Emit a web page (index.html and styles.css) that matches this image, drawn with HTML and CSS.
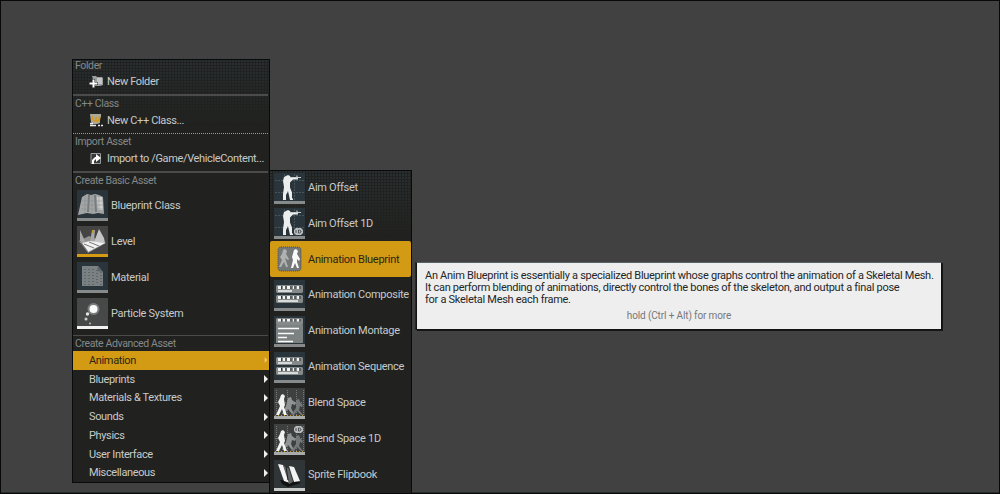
FILE: index.html
```html
<!DOCTYPE html>
<html lang="en">
<head>
<meta charset="utf-8">
<title>Content Browser</title>
<link rel="stylesheet" href="styles.css">
</head>
<body>
<svg class="defs" width="0" height="0" aria-hidden="true">
  <defs>
    <symbol id="aim" viewBox="0 0 31 28">
      <path d="M1 7.500H30M1 19.500H30M10.500 1V28M20.500 1V28" stroke="#46545b" stroke-dasharray="2 1" fill="none"/>
      <path d="M12 3l2-1 2 1 1 2h7v1.500h-5l-3 3v5l2 5v6h1v1.500h-3l-2-9-2 4v5h-3v-6l1-7-1-6 1-4z" fill="#eceeee"/>
      <path d="M16 4.500h11M23 2.500v3" stroke="#c9cdce" stroke-width="1.200"/>
    </symbol>
    <symbol id="strip" viewBox="0 0 27 8" preserveAspectRatio="none">
      <path d="M1 0H26L27 1V7L26 8H1L0 7V1Z" fill="#858989"/>
      <path d="M2 1h3v3H2zM7 1h2v3H7zM11 1h3v3h-3zM17 1h1v3h-1zM21 1h2v3h-2z" fill="#f2f3f3"/>
      <path d="M5.500 1v3M10 1v3M15 1v3M19 1v3M24 1v3" stroke="#363a3b"/>
    </symbol>
    <symbol id="strips" viewBox="0 0 31 28">
      <use href="#strip" x="2" y="5" width="27" height="8"/>
      <use href="#strip" x="2" y="15" width="27" height="8"/>
      <path d="M4 11H18M4 21H24" stroke="#f5f5f5" stroke-width="1.300"/>
    </symbol>
    <symbol id="blend" viewBox="0 0 31 28">
      <path d="M2.500 2V27M13.500 2V27M22.500 2V27M29.500 2V27M1 14.500H30" stroke="#74797b" stroke-dasharray="1 1"/>
      <path d="M14 10l3-1 1 3 4 3-1 2-3-1-1 4 3 6h-2l-4-5-4 5h-2l4-8z" fill="#909495"/>
      <path d="M22 12l3-1 1 3 3 3-1 2-2-1-1 4 4 5h-2l-4-4-3 4h-3l5-7z" fill="#747879"/>
      <path d="M7 7l2-1 2 2-1 3 1 6-1 2 3 8h-3l-2-6-3 6H2l4-9-2-4 2-4z" fill="#f1f2f2"/>
      <path d="M1 27.500H30" stroke="#c79a27" stroke-dasharray="1 2"/>
    </symbol>
    <symbol id="oned" viewBox="0 0 9 7">
      <path d="M2 0h5l2 2v3L7 7H2L0 5V2z" fill="#b9bdbe"/>
      <path d="M2 2v3M4.500 2v3h1l1.500-1V3L5.500 2z" fill="none" stroke="#33393b" stroke-width=".8"/>
    </symbol>
  </defs>
</svg>
<main class="viewport">
  <nav class="menu">
    <section class="group small first">
      <h2>Folder</h2>
      <div class="command"><svg width="14" height="13" viewBox="0 0 14 13"><path d="M3 1h4l1 1h5l1 1v7l-3 1H6z" fill="#9b9d9d"/><path d="M8 3h5v6H8z" fill="#c5c7c7"/><path d="M4.500 4v9M0 8.500h9" stroke="#222" stroke-width="3"/><path d="M4.500 4.500v8M.5 8.500h8" stroke="#fff" stroke-width="2"/></svg><span>New Folder</span></div>
    </section>
    <section class="group small dotted">
      <h2>C++ Class</h2>
      <div class="command"><svg width="14" height="13" viewBox="0 0 14 13"><path d="M1 0h11v3l-1 1v5l-3 1H4L2 8z" fill="#aaa99c"/><path d="M3.500 2v3l2 2h4l1-2V2M7 3v4" fill="none" stroke="#d59a19" stroke-width="1.700"/><path d="M1 11.500h6M9 11.500h2M12 11.500h2M1 9.500h3" stroke="#eee" stroke-width="1.300"/></svg><span>New C++ Class...</span></div>
    </section>
    <section class="group small import">
      <h2>Import Asset</h2>
      <div class="command"><svg width="14" height="13" viewBox="0 0 14 13"><path d="M2 1.500h9.500v10H2z" fill="#363939" stroke="#979a9a"/><path d="M3 12V8l3-3h1V2l5 4-5 4V7L5 9v3z" fill="#fff"/></svg><span>Import to /Game/VehicleContent...</span></div>
    </section>
    <section class="group basic">
      <h2>Create Basic Asset</h2>
      <div class="asset"><svg class="thumb" viewBox="0 0 31 28"><path d="M5 7l5-3 4 1 4-1 4 1 4 2 1 17-6-1-5 1-6-1-9 2z" fill="#a4a6a6"/><path d="M12 5l-1 17M18 5l1 17" stroke="#777b7b" stroke-width="2"/><path d="M20 7h5l1 13h-5z" fill="#d0d0d0"/><path d="M5 11h20M5 15h21M4 19h22M8 5v18M15 5v18M22 5v17" stroke="#858989" stroke-width=".5"/></svg><span>Blueprint Class</span></div>
      <div class="asset level"><svg class="thumb" viewBox="0 0 31 28"><path d="M2 15l10-5 17 7-18 10z" fill="#929292"/><path d="M3 4l4 9 1 3-5 1zM15 4h3l-1 12h-4z" fill="#a7a7a7"/><path d="M22 3l5 9 1 5-11-1z" fill="#c5c5c5"/><path d="M5 17l8-2 15 2-17 9z" fill="#f1f1f1"/><path d="M7 18l10 4M12 16l10 4M3 15l8 11" stroke="#777"/><path d="M15 4h2v3h-2z" fill="#c99a23"/></svg><span>Level</span></div>
      <div class="asset"><svg class="thumb" viewBox="0 0 31 28"><path d="M5 4h16l5 6v14H5z" fill="#7b8082"/><path d="M8 7v16M12 7v16M16 7v16M20 8v15M24 10v13" stroke="#464e52" stroke-dasharray="1 2"/><path d="M21 4l-1 5 6 1" fill="#5c6569"/></svg><span>Material</span></div>
      <div class="asset particle"><svg class="thumb" viewBox="0 0 31 28"><circle cx="16.500" cy="11" r="6" fill="#7b7d7d"/><circle cx="16.500" cy="11" r="4" fill="#fafafa"/><circle cx="10.500" cy="16" r="1.700" fill="#e4e4e4"/><circle cx="9" cy="21" r="1.500" fill="#ccc"/><circle cx="13" cy="25.500" r="1" fill="#bbb"/></svg><span>Particle System</span></div>
    </section>
    <section class="group advanced">
      <h2>Create Advanced Asset</h2>
      <div class="category active"><span>Animation</span><i></i></div>
      <div class="category"><span>Blueprints</span><i></i></div>
      <div class="category"><span>Materials &amp; Textures</span><i></i></div>
      <div class="category"><span>Sounds</span><i></i></div>
      <div class="category"><span>Physics</span><i></i></div>
      <div class="category"><span>User Interface</span><i></i></div>
      <div class="category"><span>Miscellaneous</span><i></i></div>
    </section>
  </nav>
  <nav class="submenu">
    <div class="entry"><svg class="thumb" viewBox="0 0 31 28"><use href="#aim" width="31" height="28"/></svg><span>Aim Offset</span></div>
    <div class="entry"><svg class="thumb" viewBox="0 0 31 28"><use href="#aim" width="31" height="28"/><use href="#oned" x="20" y="20" width="9" height="7"/></svg><span>Aim Offset 1D</span></div>
    <div class="entry active"><svg class="thumb" viewBox="0 0 31 28"><rect x="4" y="3" width="23" height="24" rx="3" fill="#757879" stroke="#514b36" stroke-dasharray="1 1"/><path d="M9 6l2-1 2 2-1 3 3 5-1 1-3-2 1 3 2 6h-2l-2-5-3 5H5l3-7-2-3 2-3z" fill="#b0b1b1"/><path d="M20 6l2-1 2 2-1 3 3 5-1 2-2-2v3l2 6h-2l-2-5-2 5h-2l2-8-1-3z" fill="#fafafa"/></svg><span>Animation Blueprint</span></div>
    <div class="entry"><svg class="thumb" viewBox="0 0 31 28"><use href="#strips" width="31" height="28"/></svg><span>Animation Composite</span></div>
    <div class="entry"><svg class="thumb" viewBox="0 0 31 28"><use href="#strip" x="2" y="2" width="27" height="7"/><path d="M2 9h27v18H2z" fill="#7c8282"/><path d="M4 12.500h21M4 17.500h16M4 21.500h9M4 25.500h15" stroke="#fafafa" stroke-width="1.300"/></svg><span>Animation Montage</span></div>
    <div class="entry"><svg class="thumb" viewBox="0 0 31 28"><use href="#strips" width="31" height="28"/></svg><span>Animation Sequence</span></div>
    <div class="entry gray"><svg class="thumb" viewBox="0 0 31 28"><use href="#blend" width="31" height="28"/></svg><span>Blend Space</span></div>
    <div class="entry gray"><svg class="thumb" viewBox="0 0 31 28"><use href="#blend" width="31" height="28"/><use href="#oned" x="20" y="2" width="9" height="7"/></svg><span>Blend Space 1D</span></div>
    <div class="entry sprite"><svg class="thumb" viewBox="0 0 31 28"><path d="M6 20l17 1 4 2-13 4-6-3z" fill="#111"/><path d="M4 4l5 1 7 18-6-2z" fill="#f5f5f5"/><path d="M9 5l6 4 4 13-4 2z" fill="#606464"/><path d="M15 6l5 1 6 14-6 1z" fill="#f2f2f2"/><path d="M12 6l2 14" stroke="#222"/></svg><span>Sprite Flipbook</span></div>
  </nav>
  <aside class="tooltip">
    <p>An Anim Blueprint is essentially a specialized Blueprint whose graphs control the animation of a Skeletal Mesh.<br>It can perform blending of animations, directly control the bones of the skeleton, and output a final pose<br>for a Skeletal Mesh each frame.</p>
    <small>hold (Ctrl + Alt) for more</small>
  </aside>
</main>
</body>
</html>
```
FILE: styles.css
```css
* { box-sizing: border-box; }
body { margin: 0; font-family: Roboto, "Liberation Sans", sans-serif; font-size: 11px; color: #c8caca; }
.defs { position: absolute; }
.viewport { position: relative; width: 1000px; height: 494px; overflow: hidden; background: #414141; border: 1px solid #090808; box-shadow: inset 0 -1px #282e30; }
.menu, .submenu { position: absolute; z-index: 0; background-color: #212220; border: 1px solid #080b0c; white-space: nowrap; }
.menu { left: 71px; top: 58px; width: 198px; height: 424px; letter-spacing: -.36px; }
.menu::before, .submenu::before { content: ""; position: absolute; z-index: -1; inset: 0 0 auto; height: 65px; background-image: radial-gradient(circle at 1px 1px, #304049 .6px, transparent .8px); background-size: 3px 3px; mask-image: linear-gradient(#000, transparent); }
h2 { margin: 0; padding-left: 2px; height: 14px; line-height: 14px; font-size: 10.5px; font-weight: 400; letter-spacing: -.38px; color: #858888; }
.group { border-bottom: 1px solid #4b4b4b; margin-right: 1px; }
.small { height: 38.5px; border-bottom-width: 2px; }
.small.first { height: 36px; }
.first h2 { height: 13px; line-height: 12px; }
.small.dotted { height: 38px; border-bottom: 1px dotted #999; }
.dotted h2 { line-height: 15px; }
.command { display: flex; align-items: center; height: 19px; padding-left: 16px; gap: 4px; }
.dotted .command { height: 20px; }
.command svg { flex: none; }
.first .command { height: 17px; }
.import { padding-top: 1px; }
.basic { height: 163.5px; padding-top: 1px; }
.asset { display: flex; align-items: center; height: 36px; padding-left: 4px; gap: 3px; }
.asset span { letter-spacing: -.28px; }
.thumb { width: 31px; height: 31px; background: #29343b; border-bottom: 3px solid #868a8b; flex: none; }
.level .thumb { background: #444; border-color: #d49b13; }
.particle .thumb { background: #474949; border-color: #f2f2f2; }
.advanced { border: 0; margin-right: 0; }
.advanced h2 { height: 15px; line-height: 15px; }
.category { display: flex; align-items: center; justify-content: space-between; height: 18.75px; padding: 0 1px 0 16px; }
.category i { border-left: 4px solid #eee; border-top: 4px solid transparent; border-bottom: 4px solid transparent; }
.category.active, .entry.active { background: #d29b13; color: #2a2516; }
.category.active i { border-left-color: #f2cf77; transform: scale(.7); }
.submenu { left: 268px; top: 169px; width: 143px; height: 324px; letter-spacing: -.28px; }
.entry { display: flex; align-items: center; height: 36px; padding-left: 4px; gap: 3px; }
.entry:first-child { height: 34px; }
.entry:first-child span { margin-top: -1px; }
.entry span { margin-top: 0; }
.entry.active { border-radius: 2px; }
.entry.active .thumb { background: none; border-color: transparent; }
.gray .thumb { background: #3e4040; border-color: #a9abab; }
.sprite .thumb { background: #303638; border-color: #c9cbcb; }
.entry:nth-child(n+4) span { margin-top: -1px; }
.tooltip { position: absolute; left: 415px; top: 261px; width: 526px; height: 68px; background: #eee; border: 1px solid #101214; border-top-color: #56636a; box-shadow: 1px 1px #151515, -1px 0 #222628; color: #242628; padding: 7px 8px; }
.tooltip p { margin: 0; line-height: 12px; white-space: nowrap; letter-spacing: -.285px; }
.tooltip small { display: block; margin-top: 4px; text-align: center; font-size: 10px; line-height: 12px; color: #777; letter-spacing: -.13px; }
```
